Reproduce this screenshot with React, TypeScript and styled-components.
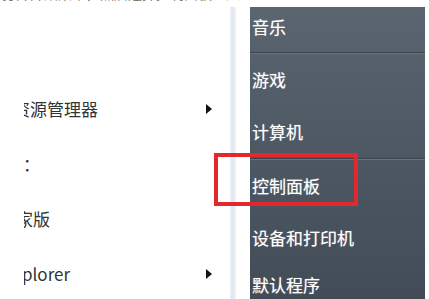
import React from 'react';
import styled, { createGlobalStyle } from 'styled-components';

const GlobalStyle = createGlobalStyle`
  html, body {
    margin: 0;
    padding: 0;
    background: #ffffff;
  }
  body {
    font-family: "Noto Sans CJK SC", "Noto Sans", "Liberation Sans", sans-serif;
  }
`;

const Screen = styled.div`
  position: relative;
  width: 429px;
  height: 299px;
  overflow: hidden;
  display: flex;
  background: #ffffff;
`;

const LeftPane = styled.div`
  width: 250px;
  display: flex;
  flex-direction: column;
`;

const Caption = styled.div`
  height: 6px;
  overflow: hidden;
  flex-shrink: 0;
`;

const CaptionText = styled.div`
  margin-top: -15px;
  margin-left: 2px;
  font-size: 14px;
  line-height: 16px;
  color: #777;
  white-space: nowrap;
`;

const LeftBody = styled.div`
  flex: 1;
  display: flex;
  padding-top: 1px;
`;

const Gutter = styled.div`
  width: 24px;
  flex-shrink: 0;
`;

const ProgramList = styled.div`
  width: 206px;
  overflow: hidden;
  padding-top: 74px;
  display: flex;
  flex-direction: column;
`;

const ProgramRow = styled.div`
  height: 55px;
  display: flex;
  align-items: center;
  justify-content: space-between;
  padding-right: 18px;
`;

const ProgramLabel = styled.span<{ $cut: number }>`
  margin-left: ${(p) => -p.$cut}px;
  font-size: 17px;
  color: #333;
  white-space: nowrap;
`;

const Arrow = styled.span`
  width: 0;
  height: 0;
  border-top: 5px solid transparent;
  border-bottom: 5px solid transparent;
  border-left: 6px solid #111;
`;

const Strip = styled.div`
  width: 6px;
  background: linear-gradient(to right, #edf1f6, #dfe6ef 50%, #f1f4f8);
`;

const Panel = styled.div`
  width: 175px;
  margin-top: 7px;
  background: linear-gradient(to bottom, #5a6570 0%, #4d5863 50%, #434c56 100%);
  display: flex;
  flex-direction: column;
`;

const Group = styled.div<{ $last?: boolean }>`
  display: flex;
  flex-direction: column;
  border-bottom: ${(p) => (p.$last ? 'none' : '1px solid #3b444d')};
  box-shadow: ${(p) => (p.$last ? 'none' : '0 1px 0 #6b747d')};
  margin-bottom: ${(p) => (p.$last ? '0' : '1px')};
`;

const PanelItem = styled.div<{ $h: number; $shift?: number }>`
  height: ${(p) => p.$h}px;
  box-sizing: border-box;
  padding-bottom: ${(p) => p.$shift ?? 0}px;
  display: flex;
  align-items: center;
  padding-left: 2px;
  font-size: 17px;
  color: #ffffff;
  white-space: nowrap;
  text-shadow: 0 0 1px rgba(255, 255, 255, 0.55);
`;

const RightEdge = styled.div`
  flex: 1;
  background: #ffffff;
`;

const Highlight = styled.div`
  position: absolute;
  left: 214px;
  top: 153px;
  width: 136px;
  height: 45px;
  border: 4px solid #e3282d;
`;

const programs = [
  { label: '资源管理器', cut: 11, arrow: true },
  { label: '：', cut: 1, arrow: false },
  { label: '家版', cut: 8, arrow: false },
  { label: 'plorer', cut: 2, arrow: true },
];

export default function App() {
  return (
    <>
      <GlobalStyle />
      <Screen>
        <LeftPane>
          <Caption>
            <CaptionText>打开开始菜单，然后选择控制面板进入</CaptionText>
          </Caption>
          <LeftBody>
            <Gutter />
            <ProgramList>
              {programs.map((p) => (
                <ProgramRow key={p.label}>
                  <ProgramLabel $cut={p.cut}>{p.label}</ProgramLabel>
                  {p.arrow && <Arrow />}
                </ProgramRow>
              ))}
            </ProgramList>
            <Strip />
          </LeftBody>
        </LeftPane>
        <Panel>
          <Group>
            <PanelItem $h={45} $shift={7}>音乐</PanelItem>
          </Group>
          <Group>
            <PanelItem $h={51}>游戏</PanelItem>
            <PanelItem $h={53}>计算机</PanelItem>
          </Group>
          <Group $last>
            <PanelItem $h={51}>控制面板</PanelItem>
            <PanelItem $h={52}>设备和打印机</PanelItem>
            <PanelItem $h={42}>默认程序</PanelItem>
          </Group>
        </Panel>
        <RightEdge />
        <Highlight />
      </Screen>
    </>
  );
}
